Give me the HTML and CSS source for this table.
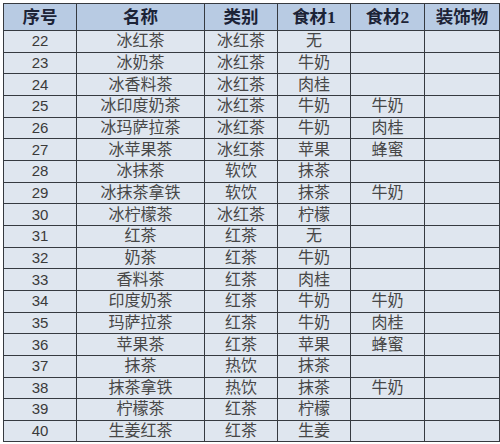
FILE: index.html
```html
<!DOCTYPE html>
<html lang="zh">
<head>
<meta charset="utf-8">
<link rel="stylesheet" href="styles.css">
</head>
<body>
<table class="menu">
  <colgroup>
    <col class="c-no"><col class="c-name"><col class="c-type"><col class="c-i1"><col class="c-i2"><col class="c-deco">
  </colgroup>
  <thead>
    <tr><th>序号</th><th>名称</th><th>类别</th><th>食材1</th><th>食材2</th><th>装饰物</th></tr>
  </thead>
  <tbody>
    <tr><td class="num">22</td><td>冰红茶</td><td>冰红茶</td><td>无</td><td></td><td></td></tr>
    <tr><td class="num">23</td><td>冰奶茶</td><td>冰红茶</td><td>牛奶</td><td></td><td></td></tr>
    <tr><td class="num">24</td><td>冰香料茶</td><td>冰红茶</td><td>肉桂</td><td></td><td></td></tr>
    <tr><td class="num">25</td><td>冰印度奶茶</td><td>冰红茶</td><td>牛奶</td><td>牛奶</td><td></td></tr>
    <tr><td class="num">26</td><td>冰玛萨拉茶</td><td>冰红茶</td><td>牛奶</td><td>肉桂</td><td></td></tr>
    <tr><td class="num">27</td><td>冰苹果茶</td><td>冰红茶</td><td>苹果</td><td>蜂蜜</td><td></td></tr>
    <tr><td class="num">28</td><td>冰抹茶</td><td>软饮</td><td>抹茶</td><td></td><td></td></tr>
    <tr><td class="num">29</td><td>冰抹茶拿铁</td><td>软饮</td><td>抹茶</td><td>牛奶</td><td></td></tr>
    <tr><td class="num">30</td><td>冰柠檬茶</td><td>冰红茶</td><td>柠檬</td><td></td><td></td></tr>
    <tr><td class="num">31</td><td>红茶</td><td>红茶</td><td>无</td><td></td><td></td></tr>
    <tr><td class="num">32</td><td>奶茶</td><td>红茶</td><td>牛奶</td><td></td><td></td></tr>
    <tr><td class="num">33</td><td>香料茶</td><td>红茶</td><td>肉桂</td><td></td><td></td></tr>
    <tr><td class="num">34</td><td>印度奶茶</td><td>红茶</td><td>牛奶</td><td>牛奶</td><td></td></tr>
    <tr><td class="num">35</td><td>玛萨拉茶</td><td>红茶</td><td>牛奶</td><td>肉桂</td><td></td></tr>
    <tr><td class="num">36</td><td>苹果茶</td><td>红茶</td><td>苹果</td><td>蜂蜜</td><td></td></tr>
    <tr><td class="num">37</td><td>抹茶</td><td>热饮</td><td>抹茶</td><td></td><td></td></tr>
    <tr><td class="num">38</td><td>抹茶拿铁</td><td>热饮</td><td>抹茶</td><td>牛奶</td><td></td></tr>
    <tr><td class="num">39</td><td>柠檬茶</td><td>红茶</td><td>柠檬</td><td></td><td></td></tr>
    <tr><td class="num">40</td><td>生姜红茶</td><td>红茶</td><td>生姜</td><td></td><td></td></tr>
  </tbody>
</table>
</body>
</html>
```
FILE: styles.css
```css
html, body {
  margin: 0;
  padding: 0;
  background: #ffffff;
}
body {
  padding: 3px 0 0 3px;
}
.menu {
  border-collapse: collapse;
  table-layout: fixed;
  width: 496px;
  font-family: "Liberation Sans", "Noto Sans CJK SC", sans-serif;
}
.c-no { width: 73px; }
.c-name { width: 128px; }
.c-type { width: 73px; }
.c-i1 { width: 73px; }
.c-i2 { width: 74px; }
.c-deco { width: 75px; }
.menu th, .menu td {
  border: 1px solid #363a40;
  padding: 0;
  text-align: center;
  vertical-align: middle;
  overflow: hidden;
  white-space: nowrap;
}
.menu th {
  background: #b8cbe3;
  color: #1c2336;
  font-family: "Liberation Serif", "Noto Sans CJK SC", serif;
  font-weight: bold;
  font-size: 17.5px;
  height: 26px;
  line-height: 26px;
}
.menu td {
  background: #dfe6ef;
  color: #474747;
  font-size: 16px;
  height: 20.67px;
  line-height: 20px;
}
.menu td.num {
  font-size: 15px;
  color: #3a3a3a;
}
```
